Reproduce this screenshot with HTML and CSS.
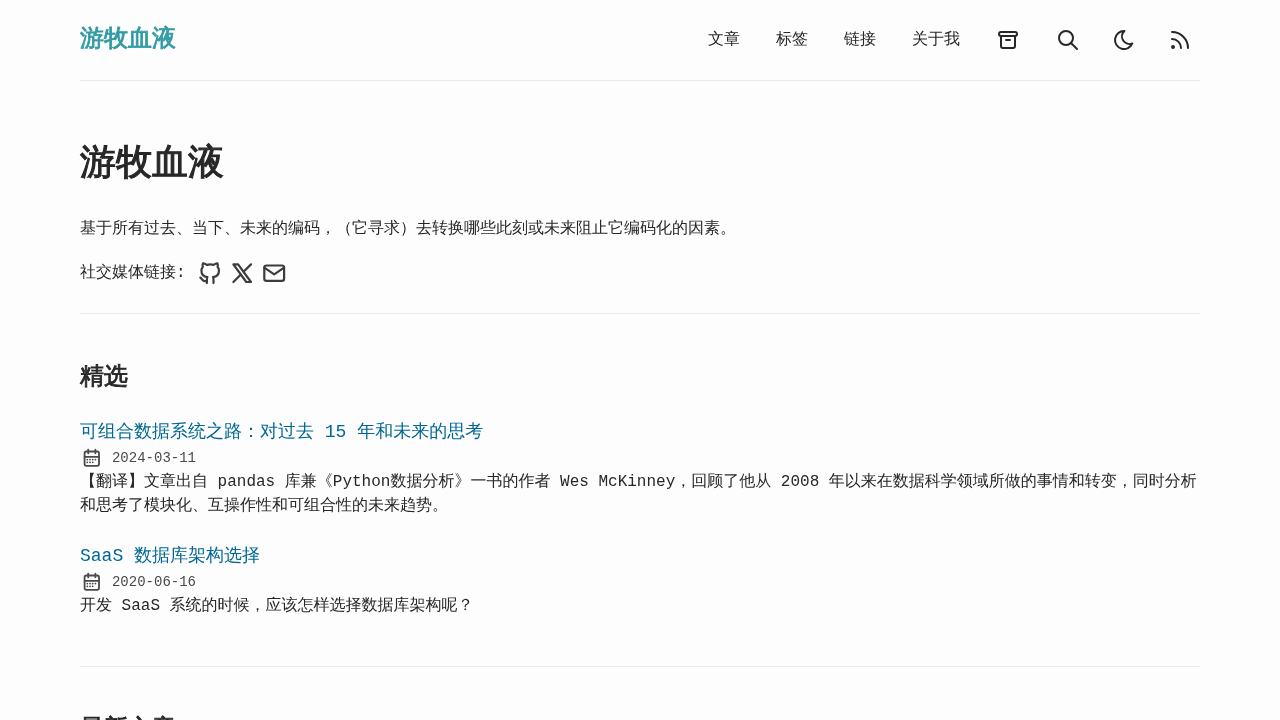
FILE: index.html
```html
<!DOCTYPE html>
<html>
<head>
<meta charset="utf-8">
<title>游牧血液</title>
<link rel="stylesheet" href="styles.css">
</head>
<body>
<div class="wrap">
  <header class="header">
    <a class="logo" href="#">游牧血液</a>
    <nav class="nav">
      <a class="nav-link" href="#">文章</a>
      <a class="nav-link" href="#">标签</a>
      <a class="nav-link" href="#">链接</a>
      <a class="nav-link" href="#">关于我</a>
      <a class="nav-icon" href="#" aria-label="归档">
        <svg viewBox="0 0 24 24"><path d="M3 4m0 2a2 2 0 0 1 2-2h14a2 2 0 0 1 2 2v0a2 2 0 0 1-2 2h-14a2 2 0 0 1-2-2z"/><path d="M5 8v10a2 2 0 0 0 2 2h10a2 2 0 0 0 2-2v-10"/><path d="M10 12h4"/></svg>
      </a>
      <a class="nav-icon nav-icon-tight" href="#" aria-label="搜索">
        <svg viewBox="0 0 24 24"><path d="M10 10m-7 0a7 7 0 1 0 14 0a7 7 0 1 0-14 0"/><path d="M21 21l-6-6"/></svg>
      </a>
      <a class="nav-icon nav-icon-tight" href="#" aria-label="主题">
        <svg viewBox="0 0 24 24"><path d="M12 3c.132 0 .263 0 .393 0a7.5 7.5 0 0 0 7.92 12.446a9 9 0 1 1-8.313-12.454z"/></svg>
      </a>
      <a class="nav-icon nav-icon-last" href="#" aria-label="RSS">
        <svg viewBox="0 0 24 24"><path d="M5 19m-1 0a1 1 0 1 0 2 0a1 1 0 1 0-2 0"/><path d="M4 4a16 16 0 0 1 16 16"/><path d="M4 11a9 9 0 0 1 9 9"/></svg>
      </a>
    </nav>
  </header>
  <main>
    <section class="hero">
      <h1 class="hero-title">游牧血液</h1>
      <p class="hero-text">基于所有过去、当下、未来的编码，（它寻求）去转换哪些此刻或未来阻止它编码化的因素。</p>
      <div class="socials">
        <span class="socials-label">社交媒体链接:</span>
        <a class="social" href="#" aria-label="GitHub"><svg viewBox="0 0 24 24"><path d="M9 19c-4.3 1.400-4.300-2.500-6-3m12 5v-3.500c0-1 .1-1.400-.5-2c2.800-.3 5.500-1.400 5.500-6a4.600 4.600 0 0 0-1.300-3.200a4.200 4.200 0 0 0-.1-3.200s-1.100-.3-3.500 1.300a12.300 12.300 0 0 0-6.200 0c-2.400-1.600-3.500-1.300-3.500-1.300a4.200 4.200 0 0 0-.1 3.200a4.600 4.600 0 0 0-1.300 3.200c0 4.600 2.700 5.700 5.500 6c-.6.600-.6 1.200-.5 2v3.500"/></svg></a>
        <a class="social" href="#" aria-label="X"><svg viewBox="0 0 24 24"><path d="M4 4l11.733 16h4.267l-11.733-16z"/><path d="M4 20l6.768-6.768m2.460-2.460l6.772-6.772"/></svg></a>
        <a class="social" href="#" aria-label="邮件"><svg viewBox="0 0 24 24"><path d="M3 7a2 2 0 0 1 2-2h14a2 2 0 0 1 2 2v10a2 2 0 0 1-2 2h-14a2 2 0 0 1-2-2v-10z"/><path d="M3 7l9 6l9-6"/></svg></a>
      </div>
    </section>
    <section class="featured">
      <h2 class="section-title">精选</h2>
      <ul class="posts">
        <li class="post">
          <a class="post-title" href="#">可组合数据系统之路：对过去 15 年和未来的思考</a>
          <div class="post-date">
            <svg viewBox="0 0 24 24"><path d="M4 7a2 2 0 0 1 2-2h12a2 2 0 0 1 2 2v12a2 2 0 0 1-2 2h-12a2 2 0 0 1-2-2v-12z"/><path d="M16 3v4"/><path d="M8 3v4"/><path d="M4 11h16"/><path d="M7 14h.013"/><path d="M10.010 14h.005"/><path d="M13.010 14h.005"/><path d="M16.015 14h.005"/><path d="M13.015 17h.005"/><path d="M7.010 17h.005"/><path d="M10.010 17h.005"/></svg>
            <span>2024-03-11</span>
          </div>
          <p class="post-text">【翻译】文章出自 pandas 库兼《Python数据分析》一书的作者 Wes McKinney，回顾了他从 2008 年以来在数据科学领域所做的事情和转变，同时分析和思考了模块化、互操作性和可组合性的未来趋势。</p>
        </li>
        <li class="post">
          <a class="post-title" href="#">SaaS 数据库架构选择</a>
          <div class="post-date">
            <svg viewBox="0 0 24 24"><path d="M4 7a2 2 0 0 1 2-2h12a2 2 0 0 1 2 2v12a2 2 0 0 1-2 2h-12a2 2 0 0 1-2-2v-12z"/><path d="M16 3v4"/><path d="M8 3v4"/><path d="M4 11h16"/><path d="M7 14h.013"/><path d="M10.010 14h.005"/><path d="M13.010 14h.005"/><path d="M16.015 14h.005"/><path d="M13.015 17h.005"/><path d="M7.010 17h.005"/><path d="M10.010 17h.005"/></svg>
            <span>2020-06-16</span>
          </div>
          <p class="post-text">开发 SaaS 系统的时候，应该怎样选择数据库架构呢？</p>
        </li>
      </ul>
    </section>
    <section class="recent">
      <h2 class="section-title">最新文章</h2>
    </section>
  </main>
</div>
</body>
</html>
```

FILE: styles.css
```css
* { box-sizing: border-box; }
html, body { margin: 0; padding: 0; height: 720px; overflow: hidden; }
body {
  background: #fdfdfd;
  color: #282728;
  font-family: "Liberation Mono", "WenQuanYi Zen Hei", "Noto Sans CJK SC", monospace;
  font-size: 16px;
  line-height: 24px;
}
a { color: inherit; text-decoration: none; }
.wrap { width: 1120px; margin: 0 auto; will-change: opacity; }
.header {
  height: 81px;
  border-bottom: 1px solid #e9e9e9;
  display: flex;
  justify-content: space-between;
  align-items: flex-start;
}
.logo {
  margin-top: 25px;
  font-size: 24px;
  line-height: 30px;
  font-weight: 700;
  -webkit-text-stroke: 0.85px currentColor;
  color: #339ba3;
}
.nav { display: flex; align-items: flex-start; margin-top: 28px; }
.nav-link, .nav-icon { margin-right: 36px; }
.nav-icon { width: 24px; height: 24px; display: block; }
.nav-icon-tight { margin-right: 32px; }
.nav-icon-last { margin-right: 8px; }
.nav svg { display: block; width: 24px; height: 24px; fill: none; stroke: #282728; stroke-width: 2; stroke-linecap: round; stroke-linejoin: round; }
.hero { padding: 59px 0 20px; border-bottom: 1px solid #e9e9e9; }
.hero-title { margin: 0; font-size: 36px; line-height: 50px; font-weight: 700; -webkit-text-stroke: 1.1px currentColor; }
.hero-text { margin: 27px 0 0; }
.socials { display: flex; align-items: center; margin-top: 12px; height: 40px; }
.socials-label { margin-right: 9px; }
.social { width: 32px; height: 26.4px; display: flex; justify-content: center; }
.social svg { flex: none; width: 26.4px; height: 26.4px; fill: none; stroke: #3d3c3d; stroke-width: 2; stroke-linecap: round; stroke-linejoin: round; }
.featured { padding: 46px 0 24px; border-bottom: 1px solid #e9e9e9; }
.section-title { margin: 0; font-size: 24px; line-height: 36px; font-weight: 700; -webkit-text-stroke: 0.85px currentColor; }
.posts { list-style: none; margin: 22px 0 0; padding: 0; }
.post { margin-bottom: 24px; }
.post-title { display: block; font-size: 18px; line-height: 28px; color: #006894; }
.post-date { display: flex; align-items: center; height: 24px; font-size: 14px; color: #4b4a4b; }
.post-date svg { width: 21.6px; height: 21.6px; margin: 0 9.2px 0 1.2px; flex: none; fill: none; stroke: #4b4a4b; stroke-width: 2; stroke-linecap: round; stroke-linejoin: round; }
.post-text { margin: 0; }
.recent { padding-top: 45px; }
```
